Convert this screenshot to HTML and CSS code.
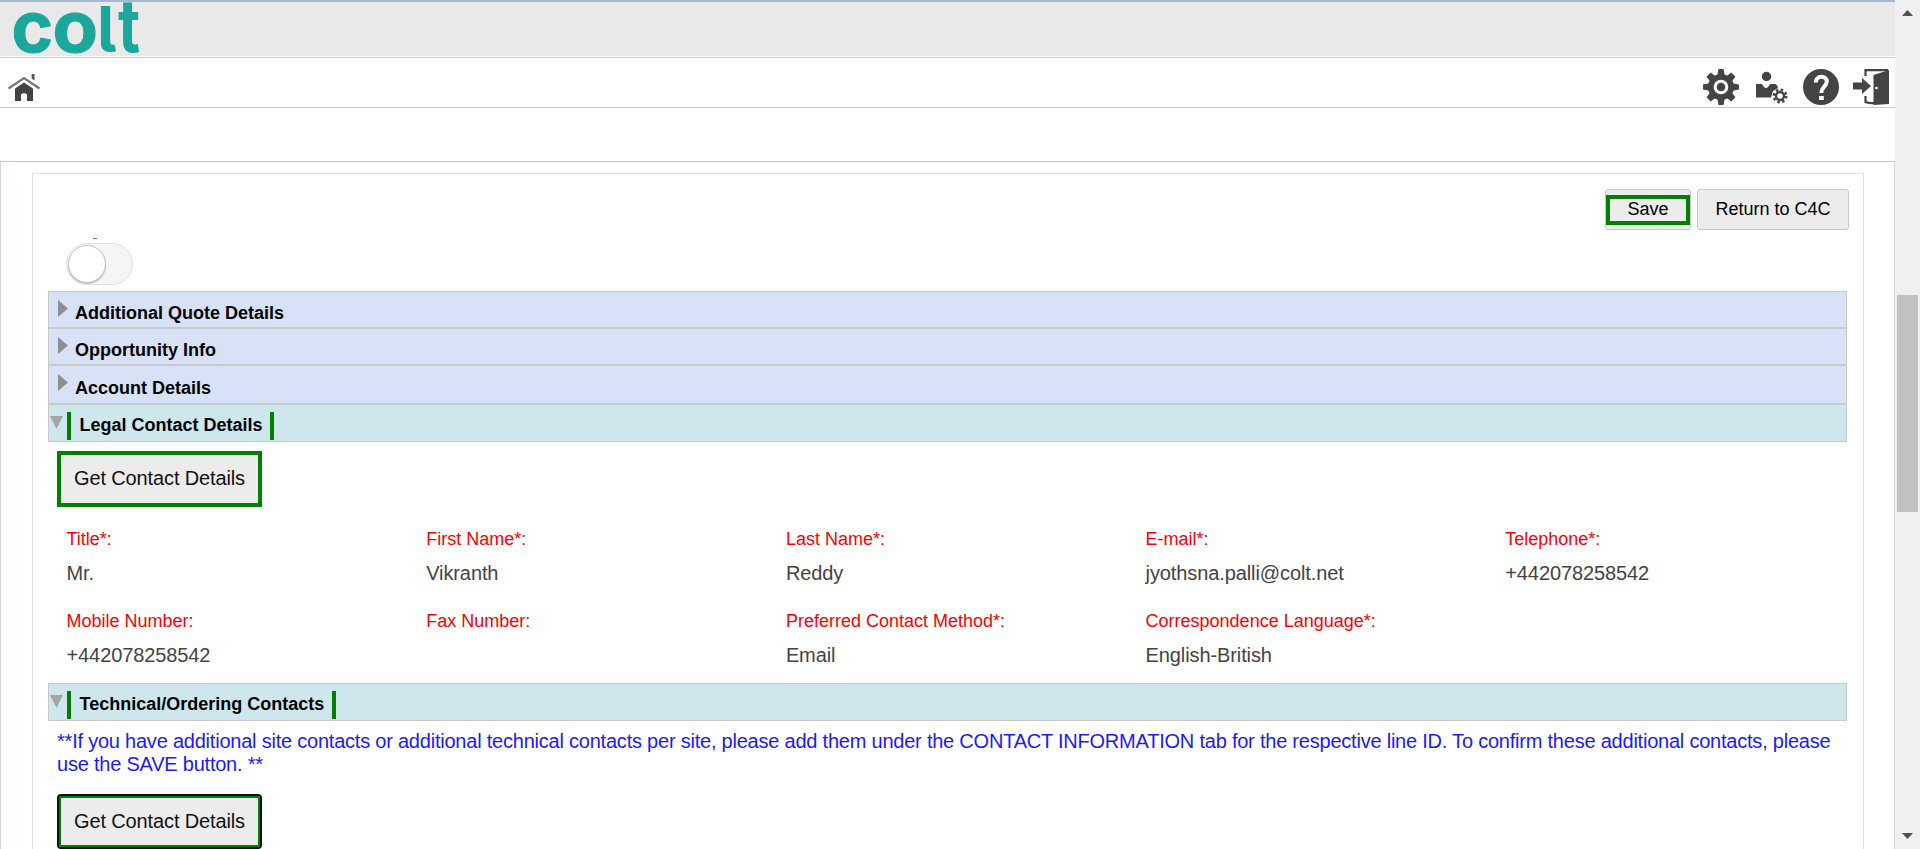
FILE: index.html
```
<!DOCTYPE html>
<html lang="en">
<head>
<meta charset="utf-8">
<title>Colt Quote</title>
<link rel="stylesheet" href="styles.css">
</head>
<body>
<div class="window">
  <div class="page">
    <header class="brand">
      <svg class="logo" width="150" height="54" viewBox="0 0 150 54" role="img" aria-label="colt">
        <text class="logo-text round" transform="translate(11.500 50) scale(1.01 1)" font-size="70">c</text>
        <text class="logo-text round" transform="translate(52.500 50) scale(1.06 1)" font-size="70">o</text>
        <text class="logo-text" transform="translate(97 50) scale(1 1)" font-size="63">l</text>
        <text class="logo-text" transform="translate(118 50) scale(0.960 1.15)" font-size="63">t</text>
      </svg>
    </header>
    <nav class="toolbar">
      <svg class="home" width="34" height="30" viewBox="0 0 34 30"><path d="M1.500 15.500 17 5l15.500 10.500" fill="none" stroke="#777" stroke-width="2.200"/><path d="M8 15.500 17 9.500l9 6V28h-6v-6.500q-3-2.500-6 0V28H8z" fill="#444"/><path d="M24.700 1h2.800v6.500l-2.800-2z" fill="#555"/></svg>
      <div class="tools">
        <svg width="36" height="36" viewBox="0 0 36 36"><g fill="#444"><circle cx="18" cy="18" r="13"/><path d="M15.500 0h5l1.500 8h-8zM15.500 36h5l1.500-8h-8zM0 15.500v5l8 1.500v-8zM36 15.500v5l-8 1.500v-8z"/><path d="M15 0.500h6l1 8h-8zM15 35.500h6l1-8h-8zM0.500 15v6l8 1v-8zM35.500 15v6l-8 1v-8z" transform="rotate(45 18 18)"/></g><circle cx="18" cy="18" r="5.800" fill="none" stroke="#fff" stroke-width="3"/></svg>
        <svg width="36" height="36" viewBox="0 0 36 36"><circle cx="13.500" cy="7.500" r="4.700" fill="#444"/><path d="M3 15h6q4 8 8 0h5q2 0 3 4l-5 3-2 6.500H3z" fill="#444"/><circle cx="27" cy="27" r="4" fill="none" stroke="#444" stroke-width="2.400"/><circle cx="27" cy="27" r="6.200" fill="none" stroke="#444" stroke-width="2.500" stroke-dasharray="2.400 2.470"/></svg>
        <svg width="36" height="36" viewBox="0 0 36 36"><circle cx="18" cy="18" r="18" fill="#444"/><path d="M12.800 13.500c0-7.500 11-7.500 11-1 0 5-5.500 5.500-5.500 11.500" fill="none" stroke="#fff" stroke-width="4"/><path d="M16 27h4.800v4H16z" fill="#fff"/></svg>
        <svg width="36" height="36" viewBox="0 0 36 36"><path d="M12.500 7V1.200H35M12.500 27v6q4 1.500 9 1" fill="none" stroke="#444" stroke-width="2.200"/><path d="M20.500 6 36 1v34l-15.500 1z" fill="#444"/><path d="M0 13.500h9V9l9 8-9 8v-4.500H0z" fill="#444"/><circle cx="23.500" cy="19" r="1.300" fill="#fff"/></svg>
      </div>
    </nav>
    <div class="spacer"></div>
    <main class="content">
      <div class="panel">
        <div class="actions">
          <button class="btn save"><span class="save-mark">Save</span></button>
          <button class="btn return">Return to C4C</button>
        </div>
        <div class="switch-row"><span class="speck"></span><div class="switch"><span class="knob"></span></div></div>
        <section class="group"><span class="arrow"></span><h2>Additional Quote Details</h2></section>
        <section class="group"><span class="arrow"></span><h2>Opportunity Info</h2></section>
        <section class="group tall"><span class="arrow"></span><h2>Account Details</h2></section>
        <section class="group open"><span class="arrow"></span><h2>Legal Contact Details</h2></section>
        <button class="contact-btn">Get Contact Details</button>
        <dl class="fields">
          <div><dt>Title*:</dt><dd>Mr.</dd></div>
          <div><dt>First Name*:</dt><dd>Vikranth</dd></div>
          <div><dt>Last Name*:</dt><dd>Reddy</dd></div>
          <div><dt>E-mail*:</dt><dd>jyothsna.palli@colt.net</dd></div>
          <div><dt>Telephone*:</dt><dd>+442078258542</dd></div>
          <div><dt>Mobile Number:</dt><dd>+442078258542</dd></div>
          <div><dt>Fax Number:</dt><dd></dd></div>
          <div><dt>Preferred Contact Method*:</dt><dd>Email</dd></div>
          <div><dt>Correspondence Language*:</dt><dd>English-British</dd></div>
        </dl>
        <section class="group open"><span class="arrow"></span><h2>Technical/Ordering Contacts</h2></section>
        <p class="note">**If you have additional site contacts or additional technical contacts per site, please add them under the CONTACT INFORMATION tab for the respective line ID. To confirm these additional contacts, please<br>use the SAVE button. **</p>
        <button class="contact-btn focused">Get Contact Details</button>
      </div>
    </main>
  </div>
  <aside class="scrollbar"><span class="up"></span><span class="thumb"></span><span class="down"></span></aside>
</div>
</body>
</html>
```
FILE: styles.css
```
* { box-sizing: border-box; }
body { margin: 0; overflow: hidden; background: #fff; font-family: "Liberation Sans", Arial, sans-serif; }
.window { display: flex; width: 1920px; height: 849px; overflow: hidden; }
.page { width: 1895px; height: 849px; display: flex; flex-direction: column; overflow: hidden; }
.brand { height: 56px; flex: none; background: #e9e9e9; border-top: 2px solid #a5b9d2; }
.logo { display: block; overflow: visible; }
.logo-text { font-family: Inter, sans-serif; font-weight: 700; fill: #1ca79c; font-feature-settings: "cv05", "ss02"; }
.round { stroke: #1ca79c; stroke-width: 1px; }
.toolbar { height: 51px; flex: none; margin-top: 1px; border-top: 1px solid #ccc; border-bottom: 1px solid #c3ccd4; display: flex; justify-content: space-between; padding: 11px 6px 0 7px; }
.home { margin-top: 4px; }
.tools { display: flex; gap: 14px; }
.spacer { height: 53px; flex: none; }
.content { flex: 1; min-height: 0; border: 1px solid #cdd8e1; border-top-color: #c3ccd4; border-bottom: 0; padding: 11px 30px 0 31px; }
.panel { height: 900px; border: 1px solid #e0e2e4; padding: 15px 15px 0; }
.actions { display: flex; justify-content: flex-end; gap: 6px; height: 41px; margin-right: -1px; }
.btn { height: 41px; padding: 0; border: 1px solid #c8c8c8; border-radius: 3px; background: #ececec; font: 18px "Liberation Sans", Arial, sans-serif; color: #000; }
.return { width: 152px; }
.save { width: 86px; display: flex; align-items: center; justify-content: center; }
.save-mark { flex: none; width: 84px; height: 30px; border: 4px solid #008000; line-height: 21px; text-align: center; }
.switch-row { height: 61px; padding: 8px 0 0 18px; }
.speck { display: block; width: 4px; height: 1px; margin: 0 0 4px 27px; background: #777; }
.switch { width: 67px; height: 42px; border: 1px solid #e2e2e2; border-radius: 21px; background: #f5f5f5; padding: 1px; }
.knob { display: block; width: 38px; height: 38px; border: 1px solid #c4c4c4; border-radius: 50%; background: #fff; box-shadow: 0 1px 1px #bbb; }
.group { display: flex; height: 37px; border: 1px solid #c9c9c9; background: #d8e2f6; width: 1799px; }
.group.tall { height: 39px; }
.group.tall h2 { margin-top: 12px; }
.group h2 { margin: 11px 0 0 7px; font-size: 18px; line-height: 21px; color: #000; }
.arrow { width: 10px; height: 17px; margin: 8px 0 0 9px; background: #8f8f8f; clip-path: polygon(0 0, 100% 50%, 0 100%); }
.group.open { height: 38px; background: #cde7ed; }
.group.open .arrow { width: 13px; height: 13px; margin: 11px 0 0 1px; background: #a6a6a6; clip-path: polygon(0 0, 100% 0, 50% 100%); }
.group.open h2 { margin: 7px 0 0 4px; height: 28px; padding: 3px 7.500px 0 8.500px; border: solid #008000; border-width: 0 4px; }
.contact-btn { display: block; width: 205px; height: 56px; margin: 9px 0 0 9px; padding: 0 0 1px; border: 4px solid #008000; background: #ececec; color: #111; font: 20px "Liberation Sans", Arial, sans-serif; letter-spacing: -0.13px; }
.fields { display: grid; grid-template-columns: repeat(5, 359.700px); grid-auto-rows: 82px; margin: 20px 0 0 18.500px; height: 156px; }
.fields dt { color: #f00; font-size: 18px; line-height: 24px; }
.fields dd { margin: 10px 0 0; color: #444; font-size: 20px; line-height: 24px; letter-spacing: -0.1px; }
.note { margin: 9px 0 0 9px; font-size: 20px; line-height: 23px; color: #1a1aff; white-space: nowrap; letter-spacing: -0.22px; }
.contact-btn.focused { height: 55px; margin-top: 18px; border: 2px solid #101010; border-radius: 4px; box-shadow: inset 0 0 0 2px #008000; }
.scrollbar { width: 25px; background: #f0f0f0; display: flex; flex-direction: column; align-items: center; }
.up { width: 11px; height: 6px; margin-top: 10px; background: #505050; clip-path: polygon(50% 0, 100% 100%, 0 100%); }
.thumb { width: 21px; height: 217px; margin-top: 279px; background: #c1c1c1; }
.down { width: 11px; height: 6px; margin: auto 0 10px; background: #505050; clip-path: polygon(0 0, 100% 0, 50% 100%); }
```
